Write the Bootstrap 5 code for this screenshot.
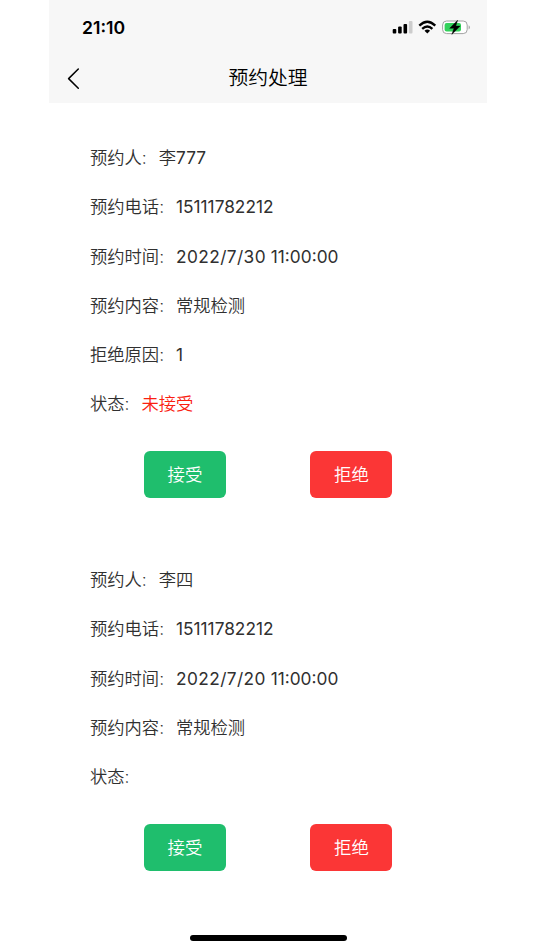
<!DOCTYPE html>
<html lang="zh-CN">
<head>
<meta charset="utf-8">
<meta name="viewport" content="width=device-width, initial-scale=1">
<title>预约处理</title>
<link href="https://cdn.jsdelivr.net/npm/bootstrap@5.3.0/dist/css/bootstrap.min.css" rel="stylesheet">
<style>
body{font-family:Inter,"Noto Sans CJK SC",sans-serif;color:#303030;background:#fff}
.phone{width:438px;height:950px;margin-left:49px}
.topbar{height:103px;background:#f7f7f7;color:#000}
.statusbar{height:54px;padding:0 15px 0 33px}
.clock{font-size:17.6px;font-weight:600;line-height:55px}
.titlebar{height:49px;display:grid;grid-template-columns:48px 1fr 48px}
.page-title{font-size:19.8px;line-height:48px;height:49px;font-weight:350}
.booking{padding:30.4px 0 0 41px}
.booking + .booking{padding-top:57px}
.field{height:49.1px;line-height:49.1px;font-size:17.3px;font-weight:350;gap:12px;white-space:nowrap}
.num{font-weight:400}
.day{letter-spacing:.4px}
.rejected{color:#fa2010}
.actions{padding:23.4px 0 0 54px;gap:84.4px}
.actions .act{width:82px;height:47px;font-size:17.4px;font-weight:350;border:0;border-radius:6px;color:#fff;padding:0}
.actions .accept{background:#1fbe6d}
.actions .refuse{background:#fb3636}
.home-bar{width:157px;height:6px;border-radius:3px;background:#000;margin-bottom:9.5px}
</style>
</head>
<body>
<main class="phone d-flex flex-column overflow-hidden">
<header class="topbar">
<div class="statusbar d-flex justify-content-between align-items-center">
<div class="clock">21:10</div>
<svg width="82" height="18" viewBox="390 18 82 18">
<rect x="392.7" y="29" width="3.6" height="4.4" rx="1"/>
<rect x="398.1" y="26.6" width="3.6" height="6.8" rx="1"/>
<rect x="403.5" y="23.9" width="3.6" height="9.5" rx="1"/>
<rect x="408.9" y="21.1" width="3.6" height="12.3" rx="1" fill="#ccc"/>
<g fill="none" stroke="#000" stroke-width="2.3"><path d="M419.3 25.6Q427.3 17.8 435.3 25.6"/><path d="M422.2 28.9Q427.3 24.1 432.4 28.9"/></g>
<path d="M424.5 30.7Q427.3 28.5 430.1 30.7L427.3 33.5Z"/>
<rect x="442.6" y="21" width="24.6" height="12.6" rx="4" fill="#fff" stroke="#a3a3a3"/>
<rect x="444.6" y="23" width="16.4" height="8.6" rx="2" fill="#33d15b"/>
<path d="M468.7 25.2Q471 27.3 468.7 29.4Z" fill="#999"/>
<path d="M457.6 20.2 449.7 28.3H454L451.8 34.4 460.2 26.1H455.8Z" stroke="#000" stroke-width=".4"/>
</svg>
</div>
<div class="titlebar align-items-center">
<svg width="48" height="48" viewBox="0 0 48 48" fill="none" stroke="#000" stroke-width="1.5" stroke-linecap="round" stroke-linejoin="round"><path d="M29.3 14 19.6 23.6 29.3 33.2"/></svg>
<div class="page-title text-center">预约处理</div>
</div>
</header>
<section class="booking">
<div class="field d-flex"><span>预约人:</span><span>李<span class="num">777</span></span></div>
<div class="field d-flex"><span>预约电话:</span><span class="num">15111782212</span></div>
<div class="field d-flex"><span>预约时间:</span><span class="num"><span class="day">2022/7/30</span> 11:00:00</span></div>
<div class="field d-flex"><span>预约内容:</span><span>常规检测</span></div>
<div class="field d-flex"><span>拒绝原因:</span><span class="num">1</span></div>
<div class="field d-flex"><span>状态:</span><span class="rejected">未接受</span></div>
<div class="actions d-flex"><button class="btn act accept">接受</button><button class="btn act refuse">拒绝</button></div>
</section>
<section class="booking">
<div class="field d-flex"><span>预约人:</span><span>李四</span></div>
<div class="field d-flex"><span>预约电话:</span><span class="num">15111782212</span></div>
<div class="field d-flex"><span>预约时间:</span><span class="num"><span class="day">2022/7/20</span> 11:00:00</span></div>
<div class="field d-flex"><span>预约内容:</span><span>常规检测</span></div>
<div class="field d-flex"><span>状态:</span></div>
<div class="actions d-flex"><button class="btn act accept">接受</button><button class="btn act refuse">拒绝</button></div>
</section>
<div class="home-bar mt-auto mx-auto flex-shrink-0"></div>
</main>
<script src="https://cdn.jsdelivr.net/npm/bootstrap@5.3.0/dist/js/bootstrap.bundle.min.js"></script>
</body>
</html>
